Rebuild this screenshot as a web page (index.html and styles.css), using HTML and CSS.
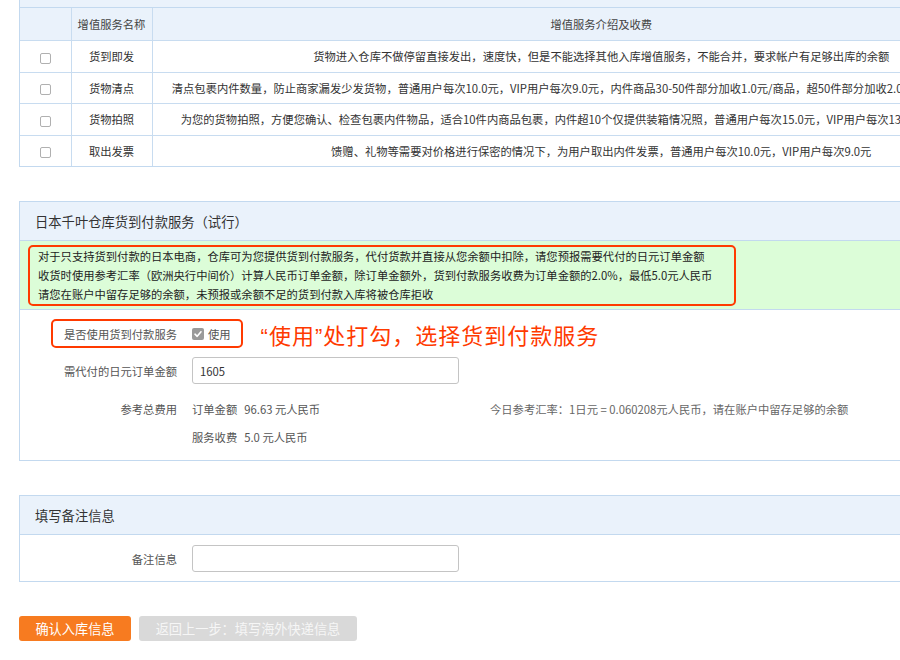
FILE: index.html
```html
<!DOCTYPE html>
<html lang="zh-CN">
<head>
<meta charset="utf-8">
<title>入库信息</title>
<link rel="stylesheet" href="styles.css">
</head>
<body>
<div class="page">
  <section class="panel panel-cut">
    <div class="panel-head"></div>
    <table class="svc">
      <colgroup><col class="c1"><col class="c2"><col class="c3"></colgroup>
      <thead>
        <tr><th></th><th>增值服务名称</th><th>增值服务介绍及收费</th></tr>
      </thead>
      <tbody>
        <tr><td><span class="cb"></span></td><td>货到即发</td><td>货物进入仓库不做停留直接发出，速度快，但是不能选择其他入库增值服务，不能合并，要求帐户有足够出库的余额</td></tr>
        <tr><td><span class="cb"></span></td><td>货物清点</td><td class="shift-a">清点包裹内件数量，防止商家漏发少发货物，普通用户每次10.0元，VIP用户每次9.0元，内件商品30-50件部分加收1.0元/商品，超50件部分加收2.0元/商品</td></tr>
        <tr><td><span class="cb"></span></td><td>货物拍照</td><td class="shift-b">为您的货物拍照，方便您确认、检查包裹内件物品，适合10件内商品包裹，内件超10个仅提供装箱情况照，普通用户每次15.0元，VIP用户每次13.0元</td></tr>
        <tr><td><span class="cb"></span></td><td>取出发票</td><td>馈赠、礼物等需要对价格进行保密的情况下，为用户取出内件发票，普通用户每次10.0元，VIP用户每次9.0元</td></tr>
      </tbody>
    </table>
  </section>

  <section class="panel panel-cod">
    <div class="panel-head">日本千叶仓库货到付款服务（试行）</div>
    <div class="notice">
      <div class="notice-box">
        <p>对于只支持货到付款的日本电商，仓库可为您提供货到付款服务，代付货款并直接从您余额中扣除，请您预报需要代付的日元订单金额</p>
        <p>收货时使用参考汇率（欧洲央行中间价）计算人民币订单金额，除订单金额外，货到付款服务收费为订单金额的2.0%，最低5.0元人民币</p>
        <p>请您在账户中留存足够的余额，未预报或余额不足的货到付款入库将被仓库拒收</p>
      </div>
    </div>
    <div class="form">
      <div class="frow r1">
        <div class="hl">
          <span class="hl-label">是否使用货到付款服务</span>
          <span class="cb checked"><svg viewBox="0 0 12 12" width="12" height="12"><path d="M3 6.2 L5.2 8.3 L9 3.8" fill="none" stroke="#fff" stroke-width="1.6" stroke-linecap="round" stroke-linejoin="round"/></svg></span>
          <span class="use">使用</span>
        </div>
        <span class="note">“使用”处打勾，选择货到付款服务</span>
      </div>
      <div class="frow r2">
        <span class="flabel">需代付的日元订单金额</span>
        <input class="txt" type="text" value="1605">
      </div>
      <div class="frow r3">
        <span class="flabel">参考总费用</span>
        <span class="val"><span>订单金额</span><span class="num">96.63 元人民币</span></span>
        <span class="rate">今日参考汇率：1日元 = 0.060208元人民币，请在账户中留存足够的余额</span>
      </div>
      <div class="frow r4">
        <span class="flabel"></span>
        <span class="val"><span>服务收费</span><span class="num">5.0 元人民币</span></span>
      </div>
    </div>
  </section>

  <section class="panel panel-remark">
    <div class="panel-head">填写备注信息</div>
    <div class="form form-remark">
      <div class="frow r2">
        <span class="flabel">备注信息</span>
        <input class="txt" type="text" value="">
      </div>
    </div>
  </section>

  <div class="actions">
    <button class="btn btn-primary" type="button">确认入库信息</button>
    <button class="btn btn-back" type="button">返回上一步：填写海外快递信息</button>
  </div>
</div>
</body>
</html>
```

FILE: styles.css
```css
html, body {
  margin: 0;
  padding: 0;
  overflow: hidden;
  background: #fff;
}
body {
  font-family: "Noto Sans CJK SC", "Microsoft YaHei", sans-serif;
  font-size: 11.3px;
  color: #333;
}
p { margin: 0; }

.page {
  padding-left: 19px;
}

.panel {
  width: 1032px;
  box-sizing: border-box;
  border: 1px solid #c3d9ef;
  background: #fff;
}
.panel-cut { margin-top: -32px; }
.panel-cod { margin-top: 34px; }
.panel-remark { margin-top: 34px; }

.panel-head {
  height: 38px;
  background: #eaf2fb;
  border-bottom: 1px solid #c3d9ef;
  display: flex;
  align-items: center;
  padding-left: 15px;
  font-size: 13.3px;
  color: #333;
}

/* services table */
.svc {
  width: 100%;
  border-collapse: collapse;
  border-style: hidden;
  table-layout: fixed;
}
.svc .c1 { width: 51px; }
.svc .c2 { width: 81px; }
.svc th, .svc td {
  border: 1px solid #c8dcf0;
  padding: 0;
  text-align: center;
  white-space: nowrap;
  overflow: hidden;
  font-weight: normal;
}
.svc th {
  height: 32px;
  background: #eaf2fb;
  color: #444;
}
.svc td {
  height: 30.5px;
  color: #333;
}
.svc td.shift-a { padding-right: 90px; }
.svc td.shift-b { padding-right: 100px; }

.cb {
  display: inline-block;
  width: 11px;
  height: 11px;
  box-sizing: border-box;
  border: 1px solid #b0b0b0;
  border-radius: 2px;
  background: #fff;
  vertical-align: middle;
}
.cb.checked {
  width: 12px;
  height: 12px;
  border: none;
  background: #9a9a9a;
  display: inline-flex;
}

/* notice */
.notice {
  background: #dcfdd8;
  border-bottom: 1px solid #c3d9ef;
  padding: 4px 8px 3px;
}
.notice-box {
  width: 708px;
  box-sizing: border-box;
  border: 2px solid #ff3a00;
  border-radius: 5px;
  padding: 0 8px;
  line-height: 19px;
  color: #222;
}

/* form */
.form {
  padding: 9px 0 13px;
}
.frow {
  display: flex;
  align-items: center;
}
.flabel {
  width: 157px;
  flex: none;
  box-sizing: border-box;
  text-align: right;
  margin-right: 15px;
  color: #555;
}
.r1 { height: 29px; }
.r2 { height: 27px; margin-top: 9px; }
.r3 { height: 20px; margin-top: 15px; }
.r4 { height: 20px; margin-top: 8px; }

.hl {
  margin-left: 31px;
  height: 29px;
  box-sizing: border-box;
  border: 2px solid #ff3a00;
  border-radius: 5px;
  display: flex;
  align-items: center;
  padding-right: 10px;
}
.hl-label {
  width: 124px;
  text-align: right;
  margin-right: 15px;
  color: #555;
}
.use {
  margin-left: 4px;
  color: #555;
}
.note {
  margin-left: 18px;
  font-family: "Liberation Sans", "Noto Sans CJK SC", sans-serif;
  font-size: 22px;
  letter-spacing: 1px;
  color: #ff3a00;
}

.txt {
  width: 267px;
  height: 27px;
  box-sizing: border-box;
  border: 1px solid #c4c4c4;
  border-radius: 3px;
  padding: 0 7px;
  margin: 0;
  font-family: inherit;
  font-size: 11.3px;
  color: #333;
  background: #fff;
  outline: none;
}

.val {
  width: 298px;
  flex: none;
  color: #555;
}
.val .num {
  margin-left: 7px;
}
.rate {
  color: #666;
}

.form-remark {
  padding: 10px 0 9px;
}
.form-remark .r2 { margin-top: 0; }

/* actions */
.actions {
  margin-top: 34px;
  display: flex;
  gap: 8px;
}
.btn {
  height: 25px;
  border: none;
  border-radius: 3px;
  padding: 0 16px;
  font-family: inherit;
  font-size: 13.2px;
  line-height: 25px;
  cursor: pointer;
}
.btn-primary {
  background: #f77b20;
  color: #fff;
  width: 112px;
}
.btn-back {
  background: #d9d9d9;
  color: #f6f6f6;
  width: 218px;
}
```
